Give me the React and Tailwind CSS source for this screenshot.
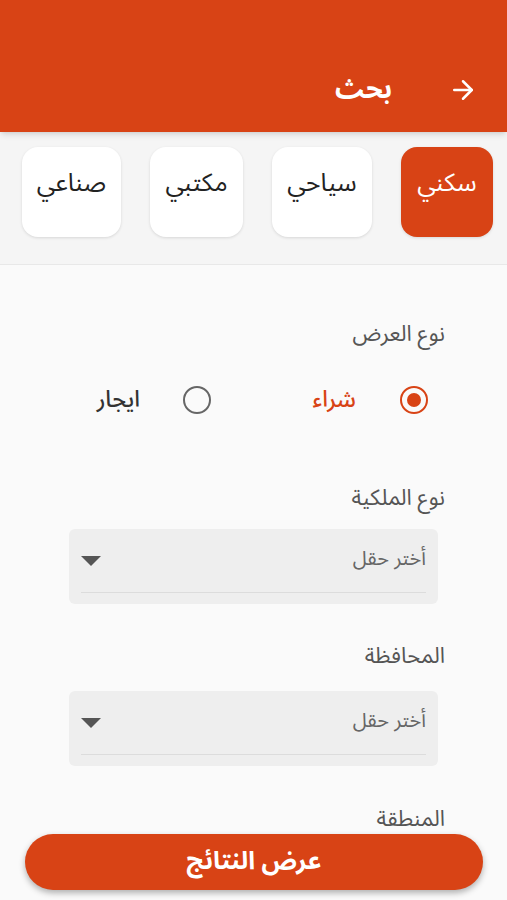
import { ArrowRight } from "lucide-react";

const categories = [
    { name: "سكني", w: "w-[92px]", active: true },
    { name: "سياحي", w: "w-[100px]" },
    { name: "مكتبي", w: "w-[93px]" },
    { name: "صناعي", w: "w-[99px]" },
];

function Caret() {
    return (
        <svg width="20" height="11" viewBox="0 0 20 11" className="mt-[4px]">
            <path d="M0 0 L20 0 L10 10 Z" fill="#555" />
        </svg>
    );
}

function Select({ className = "" }) {
    const base = "mx-[69px] h-[75px] rounded-md bg-[#eeeeee] px-3 flex flex-col";
    return (
        <div className={`${base} ${className}`}>
            <div className="flex flex-1 items-center justify-between border-b border-[#dcdcdc] pb-[2px]">
                <span className="text-[20px] text-[#666]">أختر حقل</span>
                <Caret />
            </div>
            <div className="h-[11px]" />
        </div>
    );
}

function Radio({ checked }) {
    if (checked) {
        return (
            <span className="flex h-[28px] w-[28px] items-center justify-center rounded-full border-[2.5px] border-[#d84315]">
                <span className="h-[14px] w-[14px] rounded-full bg-[#d84315]" />
            </span>
        );
    }
    return <span className="h-[28px] w-[28px] rounded-full border-[2.5px] border-[#666]" />;
}

export default function App() {
    const label = "text-[22px] leading-[28px] text-[#555] pr-[62px]";

    return (
        <div dir="rtl" className="relative h-[900px] overflow-hidden bg-[#fafafa]" style={{ fontFamily: '"Noto Sans Arabic", "DejaVu Sans", "Noto Sans", sans-serif' }}>
            <header className="relative z-10 flex h-[132px] items-center bg-[#d84315] pt-[48px] pr-[29px] text-white shadow-md">
                <ArrowRight size={30} strokeWidth={2} />
                <h1 className="mr-[56px] text-[27px] font-bold">بحث</h1>
            </header>

            <div className="flex h-[133px] gap-[29px] border-b border-[#e8e8e8] bg-[#f5f5f5] pr-[14px] pt-[15px]">
                {categories.map((c) => (
                    <div
                        key={c.name}
                        className={`${c.w} h-[90px] rounded-[16px] pt-[20px] text-center text-[25px] leading-[32px] shadow-[0_1px_3px_rgba(0,0,0,0.12)] ${c.active ? "bg-[#d84315] text-white" : "bg-white text-[#222]"}`}
                    >
                        {c.name}
                    </div>
                ))}
            </div>

            <div className="pt-[55px]">
                <div className={label}>نوع العرض</div>

                <div className="mt-[35px] flex items-center pr-[79px]">
                    <div className="flex w-[217px] items-center gap-[44px]">
                        <Radio checked />
                        <span className="text-[23px] font-medium text-[#d84315]">شراء</span>
                    </div>
                    <div className="flex items-center gap-[43px]">
                        <Radio />
                        <span className="text-[23px] font-medium text-[#333]">ايجار</span>
                    </div>
                </div>

                <div className={`${label} mt-[66px]`}>نوع الملكية</div>
                <Select className="mt-[17px]" />

                <div className={`${label} mt-[38px]`}>المحافظة</div>
                <Select className="mt-[21px]" />

                <div className={`${label} mt-[39px]`}>المنطقة</div>
            </div>

            <button className="absolute bottom-[10px] left-[25px] right-[24px] h-[56px] rounded-full bg-[#d84315] text-[25px] font-bold text-white shadow-[0_3px_6px_rgba(0,0,0,0.3)]">
                عرض النتائج
            </button>
        </div>
    );
}
